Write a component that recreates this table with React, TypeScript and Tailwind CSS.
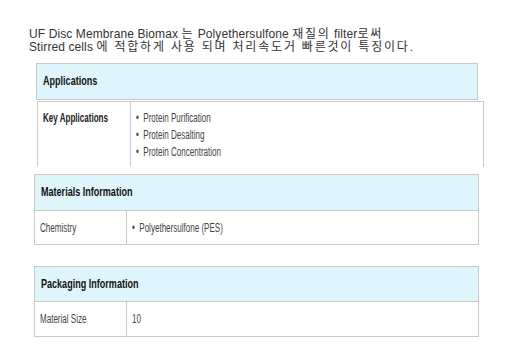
const sans = 'font-["Liberation_Sans","Noto_Sans_CJK_KR",sans-serif]'
// the table text is a condensed face; squeeze Liberation Sans to fit
const cond = 'inline-block origin-left scale-x-[0.67] whitespace-nowrap'

function Header({ title, className }: { title: string; className: string }) {
  return (
    <div className={`flex items-center border border-[#c9c9c9] bg-[#def5fc] pl-[6px] ${className}`}>
      <span className={`${cond} text-[13.5px] font-bold text-[#111]`}>{title}</span>
    </div>
  )
}

function Row({ label, children, className }: { label: string; children: React.ReactNode; className: string }) {
  return (
    <div className={`flex border-x border-b border-[#c9c9c9] bg-white text-[12px] text-[#444] ${className}`}>
      <div className="flex w-[92px] shrink-0 items-center border-r border-[#c9c9c9] pl-[5px]">
        <span className={cond}>{label}</span>
      </div>
      <div className="flex flex-1 items-center pl-[5px]">
        <span className={cond}>{children}</span>
      </div>
    </div>
  )
}

const ko = 'tracking-[1.8px]'

export default function App() {
  return (
    <div className={`w-[526px] h-[353px] overflow-hidden bg-white ${sans}`}>
      <p className="pl-[29px] pt-[28px] text-[12px] leading-[13px] tracking-[0.1px] text-[#333]">
        UF Disc Membrane Biomax <span className={ko}>는</span> Polyethersulfone <span className={ko}>재질의</span> filter<span className={ko}>로써</span>
        <br />
        Stirred cells <span className={ko}>에 적합하게 사용 되며 처리속도거 빠른것이 특징이다.</span>
      </p>

      {/* Applications */}
      <Header title="Applications" className="ml-[36px] mt-[9px] w-[442px] h-[37px]" />
      <div className="ml-[37px] mt-[1px] flex h-[66px] w-[447px] border-x border-t border-[#c9c9c9] text-[12px] text-[#444]">
        <div className="w-[93px] shrink-0 border-r border-[#c9c9c9] pl-[5px] pt-[8px] leading-[17px]">
          <span className={`${cond} font-bold text-[#222]`}>Key Applications</span>
        </div>
        <ul className="pl-[5px] pt-[8px] leading-[17px]">
          <li><span className={cond}>•&nbsp;&nbsp;Protein Purification</span></li>
          <li><span className={cond}>•&nbsp;&nbsp;Protein Desalting</span></li>
          <li><span className={cond}>•&nbsp;&nbsp;Protein Concentration</span></li>
        </ul>
      </div>

      {/* Materials */}
      <Header title="Materials Information" className="ml-[34px] mt-[7px] w-[445px] h-[37px]" />
      <Row label="Chemistry" className="ml-[34px] w-[445px] h-[34px]">
        •&nbsp;&nbsp;Polyethersulfone (PES)
      </Row>

      {/* Packaging */}
      <Header title="Packaging Information" className="ml-[34px] mt-[21px] w-[445px] h-[36px]" />
      <Row label="Material Size" className="ml-[34px] w-[445px] h-[35px]">
        10
      </Row>
    </div>
  )
}
